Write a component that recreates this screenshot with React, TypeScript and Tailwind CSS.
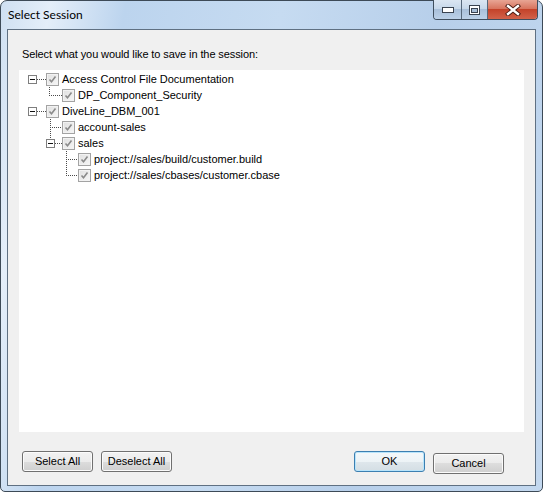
import React from "react";

const UI = { fontFamily: '"Liberation Sans", Arial, sans-serif' };

function Dots({ x1, y1, x2, y2 }: { x1: number; y1: number; x2: number; y2: number }) {
  const out: React.ReactElement[] = [];
  if (y1 === y2) {
    for (let x = x1; x <= x2; x += 2) out.push(<rect key={`h${x}`} x={x} y={y1} width={1} height={1} />);
  } else {
    for (let y = y1; y <= y2; y += 2) out.push(<rect key={`v${y}`} x={x1} y={y} width={1} height={1} />);
  }
  return <g>{out}</g>;
}

function Expander({ x, y }: { x: number; y: number }) {
  return (
    <g>
      <rect x={x + 0.5} y={y + 0.5} width={8} height={8} fill="#fff" stroke="#7e7e7e" />
      <rect x={x + 2} y={y + 4} width={5} height={1} fill="#111" />
    </g>
  );
}

function Check() {
  return (
    <span className="w-[13px] h-[13px] shrink-0 border border-[#a3a3a3] bg-[linear-gradient(135deg,#e0e0e0,#f6f6f6)] flex items-center justify-center shadow-[inset_0_0_0_1px_#f2f2f2]">
      <svg width="9" height="9" viewBox="0 0 9 9">
        <path d="M1.5 4.5 L3.5 6.8 L7.5 1.5" fill="none" stroke="#8a8a8a" strokeWidth="1.6" />
      </svg>
    </span>
  );
}

function Row({ pad, label }: { pad: string; label: string }) {
  return (
    <div className={`h-[16px] flex items-center gap-[3px] ${pad}`}>
      <Check />
      <span className="text-[11px] leading-[13px] text-black whitespace-nowrap">{label}</span>
    </div>
  );
}

function WinBtn({ label, focus }: { label: string; focus?: boolean }) {
  return (
    <button
      className={`w-[71px] h-[21px] rounded-[3px] border text-[11px] text-black leading-none ${
        focus
          ? "border-[#3c7fb1] shadow-[inset_0_0_0_1px_#b8e4fb] bg-[linear-gradient(#f4f8fa_0%,#edf3f6_50%,#dfe7ec_50%,#d4dee4_100%)]"
          : "border-[#707070] shadow-[inset_0_0_0_1px_#fbfbfb] bg-[linear-gradient(#f2f2f2_0%,#ebebeb_50%,#dddddd_50%,#cfcfcf_100%)]"
      }`}
    >
      {label}
    </button>
  );
}

export default function App() {
  return (
    <div style={UI} className="w-[543px] h-[492px] bg-white">
      <div className="w-[543px] h-[492px] rounded-t-[7px] rounded-b-[5px] border border-[#3d4a57] bg-[linear-gradient(100deg,#cfe0f2_0%,#e4eef9_8%,#bcd4ee_20%,#c6dbf1_45%,#b7cfea_70%,#c3d8ef_100%)] flex flex-col">
        {/* title bar */}
        <div className="h-[28px] flex items-start justify-between shrink-0">
          <div
            className="pl-[7px] pt-[6px] text-[12px] leading-[16px] text-black"
            style={{ fontFamily: 'Lato, "Noto Sans", sans-serif' }}
          >
            Select Session
          </div>
          <div className="mr-[4px] -mt-px flex h-[20px] border border-[#3f4e5e] border-t-0 rounded-b-[4px] overflow-hidden">
            <div className="w-[28px] h-full border-r border-[#56687b] bg-[linear-gradient(#dbe6f2_0%,#c7d8ea_45%,#a9c0da_50%,#bcd1e8_100%)] flex items-center justify-center">
              <svg width="12" height="6" viewBox="0 0 12 6">
                <rect x="0.5" y="0.5" width="11" height="5" fill="#fff" stroke="#3a4350" />
              </svg>
            </div>
            <div className="w-[26px] h-full border-r border-[#56687b] bg-[linear-gradient(#dbe6f2_0%,#c7d8ea_45%,#a9c0da_50%,#bcd1e8_100%)] flex items-center justify-center">
              <svg width="11" height="10" viewBox="0 0 11 10">
                <rect x="0.5" y="0.5" width="10" height="9" fill="#fff" stroke="#3a4350" />
                <rect x="2.5" y="3.5" width="6" height="4" fill="#a7bdd6" stroke="#3a4350" />
              </svg>
            </div>
            <div className="w-[49px] h-full bg-[linear-gradient(#e8a594_0%,#d8755f_45%,#c4432a_50%,#d2624a_100%)] flex items-center justify-center">
              <svg width="16" height="12" viewBox="0 0 16 12">
                <path d="M3 2 L13 10 M13 2 L3 10" stroke="#4a1a12" strokeWidth="4.2" strokeLinecap="square" />
                <path d="M3 2 L13 10 M13 2 L3 10" stroke="#fff" strokeWidth="2.4" strokeLinecap="square" />
              </svg>
            </div>
          </div>
        </div>

        {/* client area */}
        <div className="flex-1 ml-[6px] mr-[6px] mb-[5px] border border-[#5f7082] bg-[#f0f0f0] flex flex-col">
          <div className="mt-[18px] ml-[14px] text-[11px] leading-[13px] text-black tracking-[-0.1px]">
            Select what you would like to save in the session:
          </div>
          <div className="relative mt-[9px] ml-[11px] w-[505px] h-[362px] bg-white pt-[1px]">
            <svg className="absolute left-0 top-0" width="120" height="120" fill="#4a4a4a">
              <Dots x1={18} y1={9} x2={26} y2={9} />
              <Expander x={9} y={5} />
              <Dots x1={30} y1={17} x2={30} y2={25} />
              <Dots x1={30} y1={25} x2={42} y2={25} />
              <Dots x1={18} y1={41} x2={26} y2={41} />
              <Expander x={9} y={37} />
              <Dots x1={31} y1={49} x2={31} y2={68} />
              <Dots x1={31} y1={57} x2={42} y2={57} />
              <Dots x1={36} y1={73} x2={42} y2={73} />
              <Expander x={27} y={69} />
              <Dots x1={47} y1={81} x2={47} y2={105} />
              <Dots x1={47} y1={89} x2={58} y2={89} />
              <Dots x1={47} y1={105} x2={58} y2={105} />
            </svg>
            <Row pad="pl-[27px]" label="Access Control File Documentation" />
            <Row pad="pl-[43px]" label="DP_Component_Security" />
            <Row pad="pl-[27px]" label="DiveLine_DBM_001" />
            <Row pad="pl-[43px]" label="account-sales" />
            <Row pad="pl-[43px]" label="sales" />
            <Row pad="pl-[59px]" label="project://sales/build/customer.build" />
            <Row pad="pl-[59px]" label="project://sales/cbases/customer.cbase" />
          </div>
          <div className="mt-[19px] ml-[14px] mr-[31px] flex items-start">
            <div className="flex gap-[8px]">
              <WinBtn label="Select All" />
              <WinBtn label="Deselect All" />
            </div>
            <div className="ml-auto flex gap-[8px]">
              <WinBtn label="OK" focus />
              <div className="-mt-px">
                <WinBtn label="Cancel" />
              </div>
            </div>
          </div>
        </div>
      </div>
    </div>
  );
}
